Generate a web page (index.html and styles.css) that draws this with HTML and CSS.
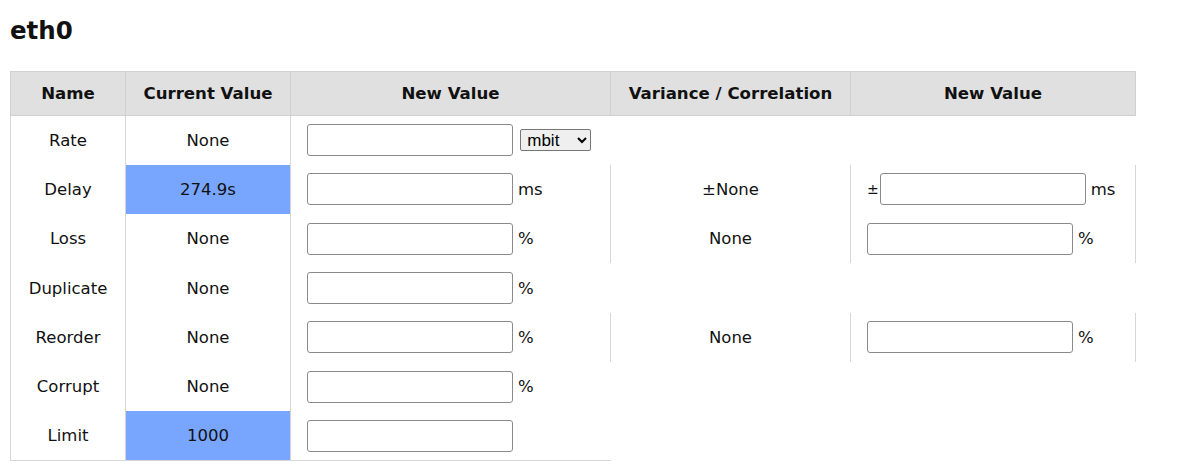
FILE: index.html
```html
<!DOCTYPE html>
<html lang="en">
<head>
    <meta charset="UTF-8">
    <meta name="viewport" content="width=device-width, initial-scale=1.0">
    <title>eth0</title>
    <link rel="stylesheet" href="styles.css">
</head>
<body>
    <h1 class="iface">eth0</h1>
    <table class="netem">
        <thead>
            <tr>
                <th class="col-name">Name</th>
                <th class="col-current">Current Value</th>
                <th class="col-new">New Value</th>
                <th class="col-var">Variance / Correlation</th>
                <th class="col-new2">New Value</th>
            </tr>
        </thead>
        <tbody>
            <tr>
                <td class="first">Rate</td>
                <td>None</td>
                <td class="field">
                    <input type="text">
                    <select class="unit-select">
                        <option>mbit</option>
                    </select>
                </td>
            </tr>
            <tr>
                <td class="first">Delay</td>
                <td class="changed">274.9s</td>
                <td class="field"><input type="text"><span class="unit">ms</span></td>
                <td>±None</td>
                <td class="field last"><span class="pm">±</span><input type="text"><span class="unit">ms</span></td>
            </tr>
            <tr>
                <td class="first">Loss</td>
                <td>None</td>
                <td class="field"><input type="text"><span class="unit">%</span></td>
                <td>None</td>
                <td class="field last"><input type="text"><span class="unit">%</span></td>
            </tr>
            <tr>
                <td class="first">Duplicate</td>
                <td>None</td>
                <td class="field"><input type="text"><span class="unit">%</span></td>
            </tr>
            <tr>
                <td class="first">Reorder</td>
                <td>None</td>
                <td class="field"><input type="text"><span class="unit">%</span></td>
                <td>None</td>
                <td class="field last"><input type="text"><span class="unit">%</span></td>
            </tr>
            <tr>
                <td class="first">Corrupt</td>
                <td>None</td>
                <td class="field"><input type="text"><span class="unit">%</span></td>
            </tr>
            <tr class="bottom">
                <td class="first">Limit</td>
                <td class="changed">1000</td>
                <td class="field"><input type="text"></td>
            </tr>
        </tbody>
    </table>
</body>
</html>
```

FILE: styles.css
```css
*{
    box-sizing: border-box;
}
body{
    margin: 0;
    padding: 0 10px;
    font-family: "DejaVu Sans", "Liberation Sans", sans-serif;
    color: #111;
    background: #fff;
}
.iface{
    font-size: 24.5px;
    font-weight: bold;
    margin: 15px 0 24px;
    line-height: 32px;
}
.netem{
    border-collapse: collapse;
    table-layout: fixed;
    font-size: 16.5px;
}
.netem th{
    background-color: #e0e0e0;
    border: 1px solid #d0d0d0;
    font-size: 16.6px;
    font-weight: bold;
    height: 44px;
    padding: 0;
}
.col-name{ width: 115px; }
.col-current{ width: 165px; }
.col-new{ width: 320px; }
.col-var{ width: 240px; }
.col-new2{ width: 285px; }
.netem td{
    height: 49.3px;
    padding: 0;
    text-align: center;
    border-left: 1px solid #d6d6d6;
}
.netem td.last{
    border-right: 1px solid #d6d6d6;
}
.netem tr.bottom td{
    border-bottom: 1px solid #d6d6d6;
}
.netem td.changed{
    background-color: #78a6ff;
}
.netem td.field{
    text-align: left;
    padding-left: 16px;
    white-space: nowrap;
}
.field input{
    width: 206px;
    height: 32px;
    border: 1px solid #8a8a8a;
    border-radius: 3px;
    padding: 0 4px;
    vertical-align: middle;
    font-size: 16px;
}
.unit{
    margin-left: 5px;
    vertical-align: middle;
}
.pm{
    font-size: 14px;
    margin-right: 1px;
    vertical-align: middle;
}
.unit-select{
    margin-left: 2px;
    height: 22px;
    width: 71px;
    font-size: 17px;
    font-family: "Liberation Sans", Arial, sans-serif;
    border: 1px solid #767676;
    border-radius: 2px;
    vertical-align: middle;
    padding: 0 0 0 2px;
}
```
